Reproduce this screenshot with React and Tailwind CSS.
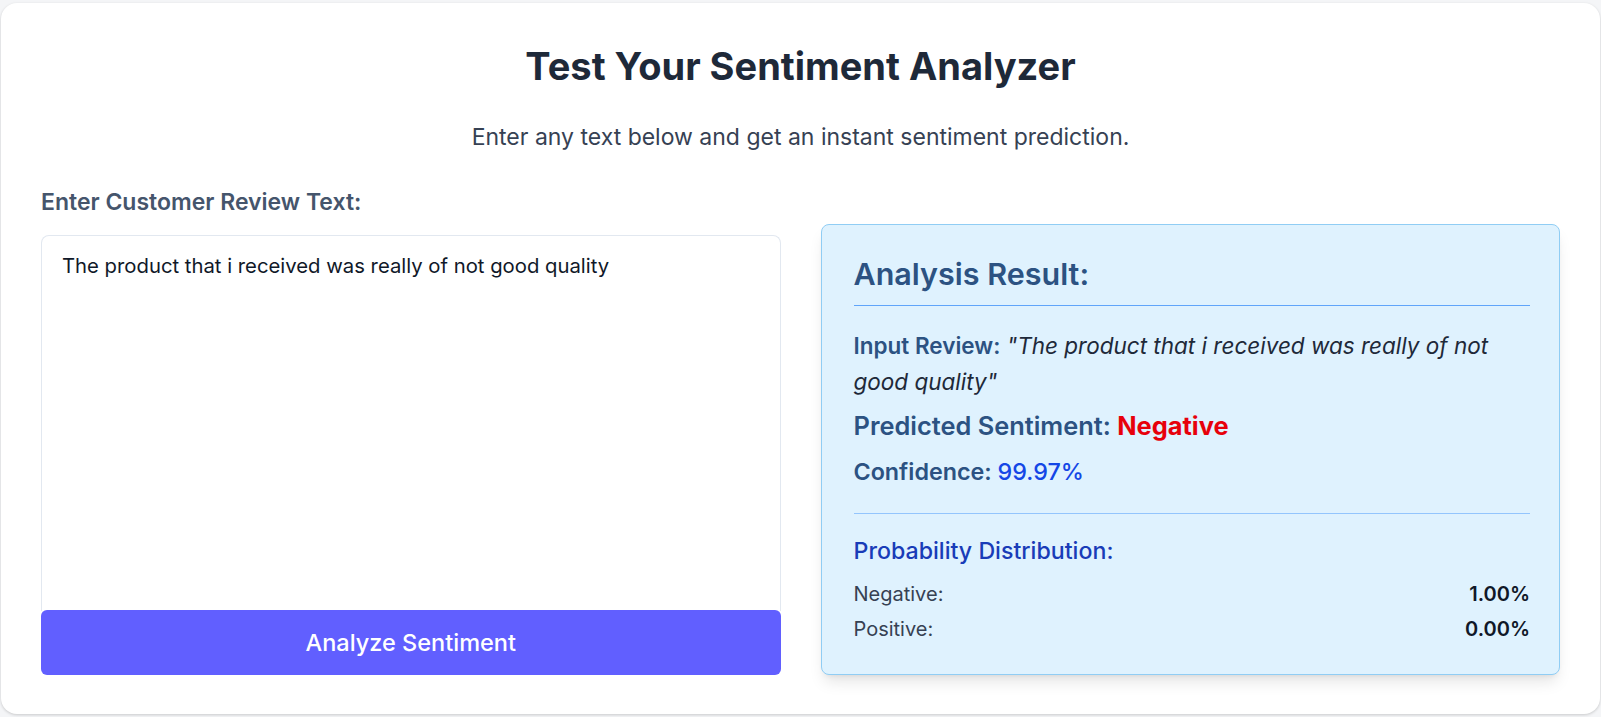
import React, { useState } from "react";

export default function App() {
    const [review, setReview] = useState("The product that i received was really of not good quality");

    const result = {
        text: "The product that i received was really of not good quality",
        sentiment: "Negative",
        confidence: "99.97%",
        probs: [
            { label: "Negative", value: "1.00%" },
            { label: "Positive", value: "0.00%" },
        ],
    };

    return (
        <div className="min-h-screen bg-[#f4f5f7] pt-[3px] px-[1px] font-['Inter',sans-serif]">
            <div className="bg-white rounded-2xl shadow-[0_1px_3px_rgba(0,0,0,0.18)] px-10 pt-[43px] pb-[39px]">

                {/* Header */}
                <h1 className="text-[38px] leading-[40px] font-bold text-gray-800 text-center">Test Your Sentiment Analyzer</h1>
                <p className="mt-[34px] text-[23px] leading-[35px] text-gray-700 text-center">
                    Enter any text below and get an instant sentiment prediction.
                </p>

                <div className="mt-[30px] grid grid-cols-2 gap-10 items-end">
                    {/* Input */}
                    <div className="flex flex-col">
                        <label className="text-[23px] leading-[35px] font-semibold text-slate-600 mb-[15px]">Enter Customer Review Text:</label>
                        <textarea
                            value={review}
                            onChange={(e) => setReview(e.target.value)}
                            className="h-[376px] resize-none rounded-t-lg border border-[#e2e8f0] border-b-0 px-[20px] pt-[15px] text-[20.3px] leading-[30px] text-gray-900 outline-none"
                        />
                        <button className="h-[65px] -mt-px rounded-md bg-indigo-500 text-white text-[23.5px] font-medium">
                            Analyze Sentiment
                        </button>
                    </div>

                    {/* Result */}
                    <div className="h-[451px] rounded-lg border border-[#90cdf4] bg-sky-100 shadow-lg pl-8 pr-[29px] pt-[29px]">
                        <h2 className="text-[30.5px] leading-[40px] font-semibold text-[#2c5282] pb-[11px]">Analysis Result:</h2>
                        <div className="h-px bg-[#60a5fa]" />

                        <p className="mt-[22px] text-[22.5px] leading-[36px] text-gray-800">
                            <span className="font-semibold text-[#2c5282]">Input Review:</span>{" "}
                            <em>"{result.text}"</em>
                        </p>
                        <p className="mt-[8px] text-[25.4px] leading-[36px] font-semibold text-[#2c5282]">
                            Predicted Sentiment: <span className="font-bold text-red-600">{result.sentiment}</span>
                        </p>
                        <p className="mt-[10px] text-[23.3px] leading-[36px] font-semibold text-[#2c5282]">
                            Confidence: <span className="font-medium text-blue-700">{result.confidence}</span>
                        </p>

                        <div className="mt-[23px] h-px bg-[#93c5fd]" />
                        <div className="pt-[20px]">
                            <h3 className="text-[23.2px] leading-[35px] font-medium text-blue-800">Probability Distribution:</h3>
                            <div className="mt-[10px] space-y-[5px]">
                                {result.probs.map((p) => (
                                    <div key={p.label} className="flex justify-between text-[20px] leading-[30px]">
                                        <span className="text-gray-700">{p.label}:</span>
                                        <span className="font-semibold text-gray-900">{p.value}</span>
                                    </div>
                                ))}
                            </div>
                        </div>
                    </div>
                </div>
            </div>
        </div>
    );
}
